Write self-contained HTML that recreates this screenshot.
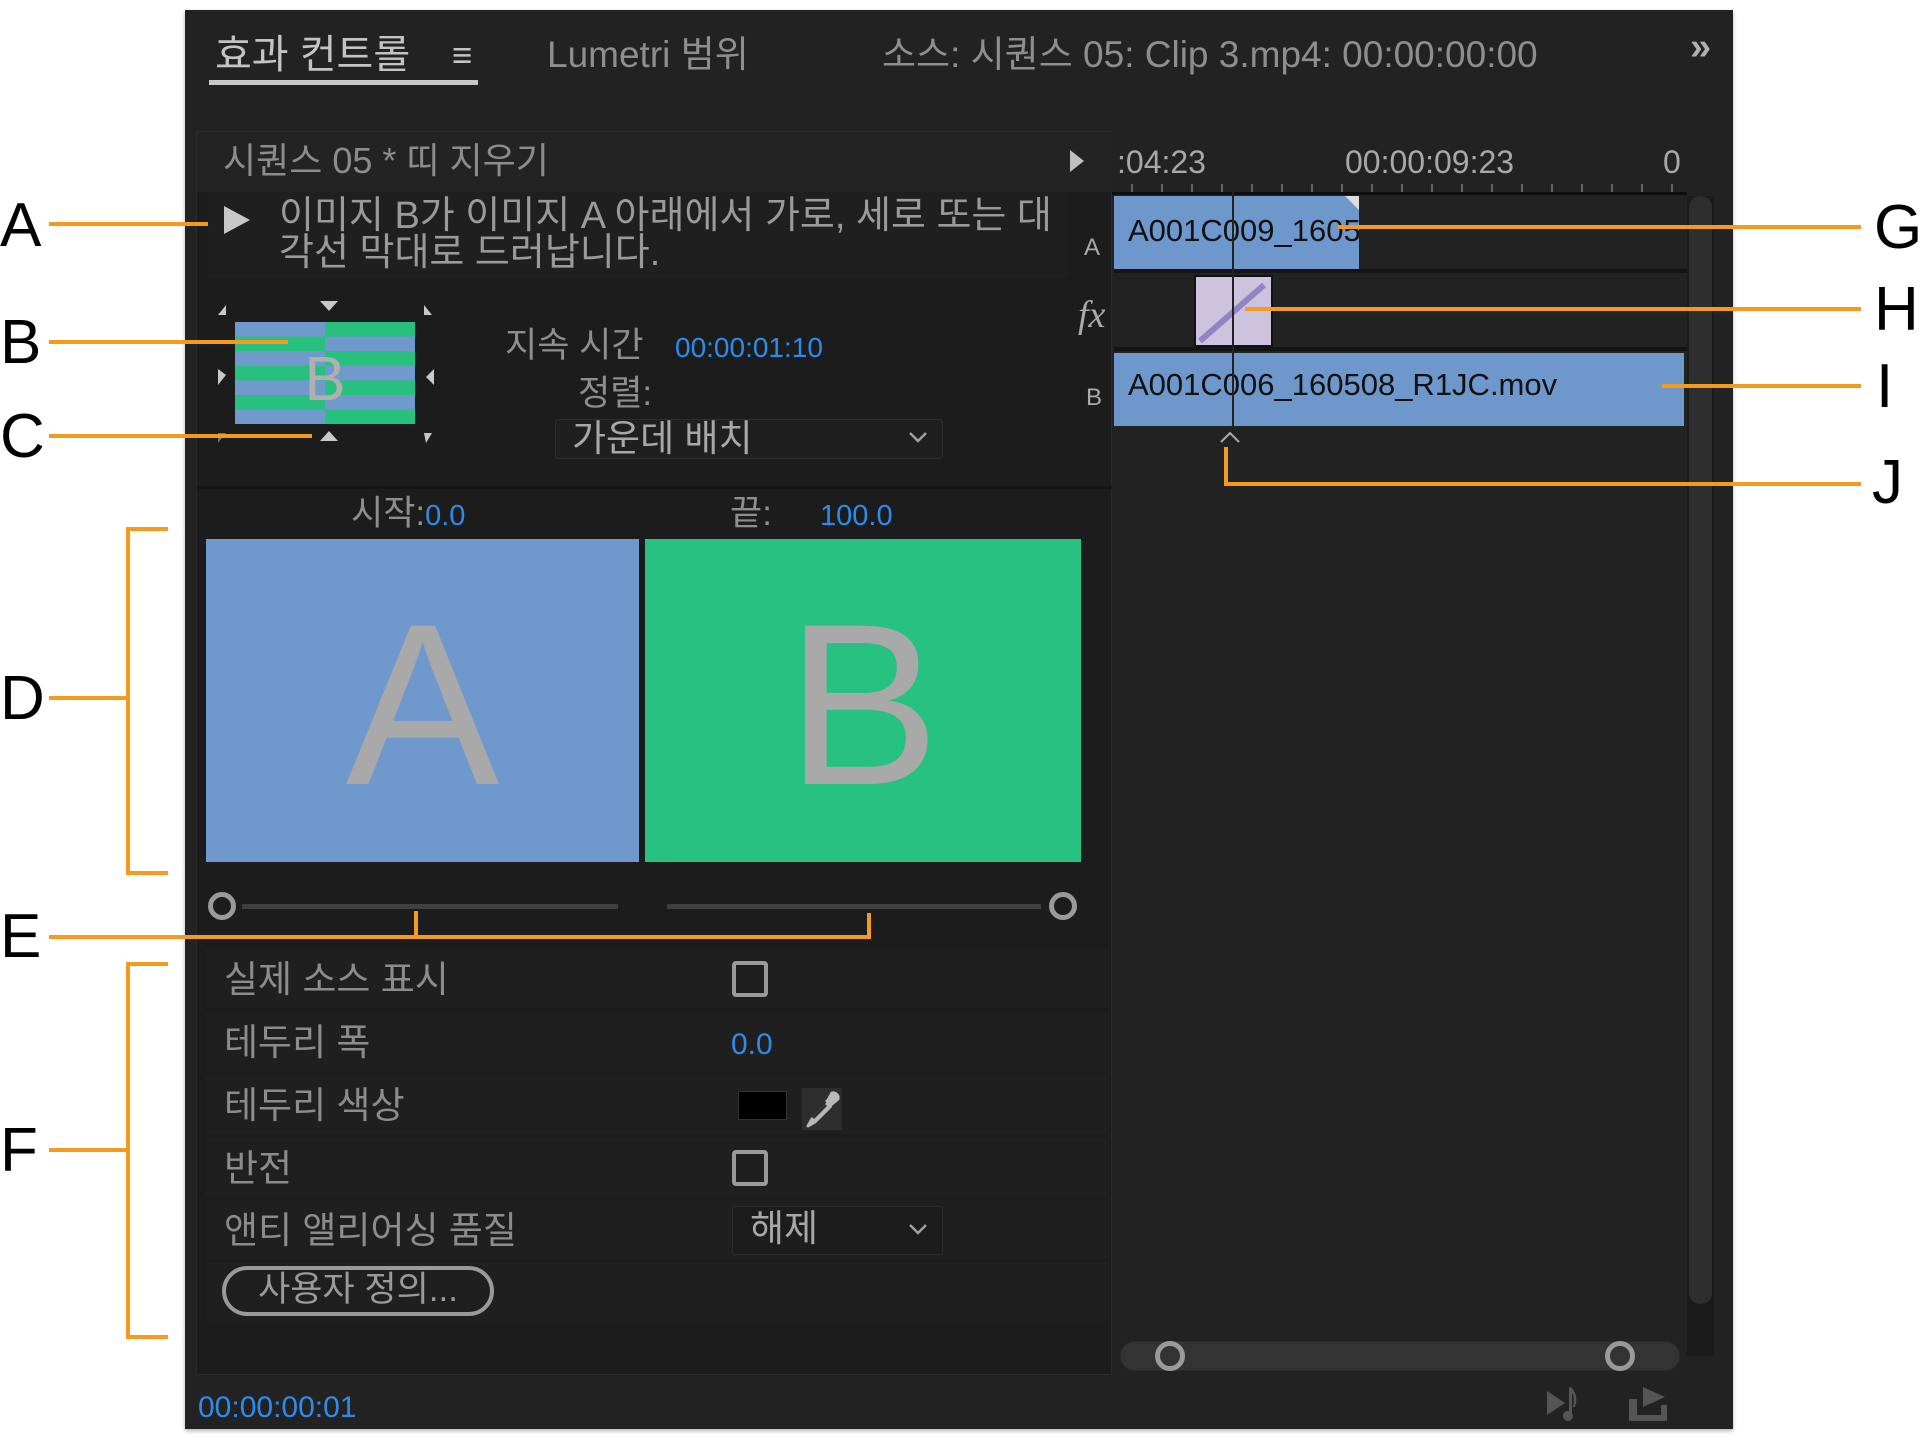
<!DOCTYPE html>
<html><head><meta charset="utf-8"><style>
*{margin:0;padding:0;box-sizing:border-box}
body{width:1920px;height:1442px;background:#fff;position:relative;overflow:hidden;font-family:"Liberation Sans","Noto Sans CJK KR",sans-serif}
.a{position:absolute}
.t{position:absolute;white-space:nowrap;line-height:1}
.o{position:absolute;background:#f39a1f}
.lbl{position:absolute;font-size:62px;color:#000;line-height:1;font-family:"Liberation Sans",sans-serif}
.g{color:#8c8c8c}
.bl{color:#2d8ceb}
.row{position:absolute;left:206px;width:903px;height:59px;background:#1f1f1f}
.cb{position:absolute;width:36px;height:36px;border:4px solid #9a9a9a;border-radius:4px}
.tri{position:absolute;width:0;height:0}
</style></head><body>
<div class="a" style="left:185px;top:10px;width:1548px;height:1419px;background:#222;box-shadow:0 2px 4px rgba(0,0,0,.3)"></div>
<!-- tabs -->
<div class="t" style="left:215px;top:35px;font-size:40px;color:#c4c4c4">효과 컨트롤</div>
<div class="t" style="left:452px;top:38px;font-size:35px;color:#c4c4c4">≡</div>
<div class="a" style="left:209px;top:80px;width:269px;height:5px;background:#c8c8c8"></div>
<div class="t" style="left:547px;top:36px;font-size:37px;color:#8e8e8e">Lumetri 범위</div>
<div class="t" style="left:882px;top:36px;font-size:37px;color:#8e8e8e">소스: 시퀀스 05: Clip 3.mp4: 00:00:00:00</div>
<div class="t" style="left:1690px;top:28px;font-size:38px;font-weight:bold;color:#b0b0b0">»</div>
<!-- left subpanel -->
<div class="a" style="left:196px;top:131px;width:916px;height:1244px;background:#1c1c1c;border:1px solid #2a2a2a"></div>
<div class="a" style="left:197px;top:132px;width:915px;height:60px;background:#232323"></div>
<div class="t g" style="left:223px;top:143px;font-size:36px">시퀀스 05 * 띠 지우기</div>
<div class="tri" style="left:1070px;top:150px;border-left:14px solid #c0c0c0;border-top:11px solid transparent;border-bottom:11px solid transparent"></div>
<div class="a" style="left:208px;top:192px;width:860px;height:86px;background:#1f1f1f"></div>
<div class="tri" style="left:224px;top:206px;border-left:26px solid #c8c8c8;border-top:14px solid transparent;border-bottom:14px solid transparent"></div>
<div class="t" style="left:279px;top:198px;font-size:38px;color:#9a9a9a;line-height:37px">이미지 B가 이미지 A 아래에서 가로, 세로 또는 대<br>각선 막대로 드러납니다.</div>
<!-- thumbnail -->
<svg class="a" style="left:210px;top:295px" width="230" height="160">
<g transform="translate(25,27)">
<rect x="0" y="0" width="90" height="102" fill="#7099cc"/><rect x="90" y="0" width="90" height="102" fill="#27c07f"/>
<rect x="0" y="14.6" width="90" height="14.6" fill="#27c07f"/><rect x="0" y="43.8" width="90" height="14.6" fill="#27c07f"/><rect x="0" y="73" width="90" height="14.6" fill="#27c07f"/>
<rect x="90" y="14.6" width="90" height="14.6" fill="#7099cc"/><rect x="90" y="43.8" width="90" height="14.6" fill="#7099cc"/><rect x="90" y="73" width="90" height="14.6" fill="#7099cc"/>
<text x="90" y="78" font-size="62" font-family="Liberation Sans" fill="#b0b0b0" text-anchor="middle">B</text>
</g>
<g fill="#c8c8c8">
<polygon points="8,20 16,10 16,20"/><polygon points="214,20 214,10 222,20"/>
<polygon points="110,6 128,6 119,16"/><polygon points="110,146 128,146 119,136"/>
<polygon points="8,74 16,80 8,90" /><polygon points="224,74 216,82 224,90"/>
<polygon points="8,138 16,138 8,148" opacity=".5"/><polygon points="214,138 222,138 216,148"/>
</g></svg>
<div class="t" style="left:505px;top:328px;font-size:35px;color:#8e8e8e">지속 시간</div>
<div class="t bl" style="left:675px;top:334px;font-size:28px">00:00:01:10</div>
<div class="t" style="left:578px;top:376px;font-size:35px;color:#8e8e8e">정렬:</div>
<div class="a" style="left:555px;top:419px;width:388px;height:40px;background:#1f1f1f;border:1px solid #2c2c2c;border-radius:3px"></div>
<div class="t" style="left:572px;top:420px;font-size:37px;color:#a8a8a8">가운데 배치</div>
<svg class="a" style="left:908px;top:430px" width="20" height="14"><path d="M2 3 L10 11 L18 3" stroke="#a0a0a0" stroke-width="2.5" fill="none"/></svg>
<!-- preview -->
<div class="a" style="left:197px;top:486px;width:915px;height:3px;background:#161616"></div>
<div class="t" style="left:351px;top:496px;font-size:35px;color:#8e8e8e">시작:<span class="bl" style="font-size:29px">0.0</span></div>
<div class="t" style="left:730px;top:496px;font-size:35px;color:#8e8e8e">끝:</div>
<div class="t bl" style="left:820px;top:502px;font-size:29px">100.0</div>
<div class="a" style="left:206px;top:539px;width:433px;height:323px;background:#6f98cc"></div>
<div class="a" style="left:645px;top:539px;width:436px;height:323px;background:#27c282"></div>
<div class="t" style="left:206px;top:590px;width:433px;text-align:center;font-size:230px;color:#a9a9a9">A</div>
<div class="t" style="left:645px;top:590px;width:436px;text-align:center;font-size:230px;color:#a9a9a9">B</div>
<!-- sliders -->
<div class="a" style="left:242px;top:904px;width:376px;height:5px;background:#3f3f3f"></div>
<div class="a" style="left:667px;top:904px;width:374px;height:5px;background:#3f3f3f"></div>
<div class="a" style="left:208px;top:892px;width:28px;height:28px;border:5px solid #9a9a9a;border-radius:50%"></div>
<div class="a" style="left:1049px;top:892px;width:28px;height:28px;border:5px solid #9a9a9a;border-radius:50%"></div>
<!-- rows -->
<div class="row" style="top:949px"></div><div class="row" style="top:1013px"></div><div class="row" style="top:1075px"></div>
<div class="row" style="top:1138px"></div><div class="row" style="top:1200px"></div><div class="row" style="top:1262px"></div>
<div class="t g" style="left:224px;top:961px;font-size:37px">실제 소스 표시</div>
<div class="cb" style="left:732px;top:961px"></div>
<div class="t g" style="left:224px;top:1024px;font-size:37px">테두리 폭</div>
<div class="t bl" style="left:731px;top:1030px;font-size:30px">0.0</div>
<div class="t g" style="left:224px;top:1087px;font-size:37px">테두리 색상</div>
<div class="a" style="left:738px;top:1091px;width:49px;height:29px;background:#000;border:1px solid #333"></div>
<div class="a" style="left:802px;top:1088px;width:40px;height:42px;background:#2e2e2e"></div>
<svg class="a" style="left:802px;top:1088px" width="40" height="42"><path d="M30 5 a5 5 0 0 1 6 6 l-6 5 l-4 -4z M24 12 l6 6 M26 15 L10 31 L6 38 L13 34 L29 18" stroke="#b8b8b8" stroke-width="3" fill="#b8b8b8" stroke-linejoin="round"/><path d="M24 17 L11 30" stroke="#2e2e2e" stroke-width="3"/></svg>
<div class="t g" style="left:224px;top:1150px;font-size:37px">반전</div>
<div class="cb" style="left:732px;top:1150px"></div>
<div class="t g" style="left:224px;top:1212px;font-size:37px">앤티 앨리어싱 품질</div>
<div class="a" style="left:732px;top:1206px;width:211px;height:49px;background:#1c1c1c;border:1px solid #2c2c2c;border-radius:3px"></div>
<div class="t" style="left:750px;top:1210px;font-size:37px;color:#a8a8a8">해제</div>
<svg class="a" style="left:908px;top:1222px" width="20" height="14"><path d="M2 3 L10 11 L18 3" stroke="#a0a0a0" stroke-width="2.5" fill="none"/></svg>
<div class="a" style="left:222px;top:1266px;width:272px;height:50px;border:4px solid #9a9a9a;border-radius:25px"></div>
<div class="t" style="left:222px;top:1272px;width:272px;text-align:center;font-size:35px;color:#9a9a9a">사용자 정의...</div>
<div class="t bl" style="left:198px;top:1393px;font-size:30px">00:00:00:01</div>
<!-- timeline -->
<div class="a" style="left:1112px;top:192px;width:575px;height:3px;background:#0e0e0e"></div>
<div class="t" style="left:1117px;top:146px;font-size:32px;color:#a8a8a8">:04:23</div>
<div class="t" style="left:1345px;top:146px;font-size:32px;color:#a8a8a8">00:00:09:23</div>
<div class="t" style="left:1663px;top:146px;font-size:32px;color:#a8a8a8">0</div>
<svg class="a" style="left:1112px;top:178px" width="575" height="14"><g stroke="#777" stroke-width="1.5">
<path d="M20 6V14M50 6V14M80 6V14M110 6V14M140 6V14M170 6V14M200 6V14M230 6V14M260 6V14M290 6V14M320 6V14M350 6V14M380 6V14M410 6V14M440 6V14M470 6V14M500 6V14M530 6V14M560 6V14"/></g></svg>
<div class="t" style="left:1084px;top:236px;font-size:24px;color:#aaa">A</div>
<div class="t" style="left:1078px;top:296px;font-size:38px;color:#aaa;font-style:italic;font-family:'Liberation Serif',serif">fx</div>
<div class="t" style="left:1086px;top:386px;font-size:24px;color:#aaa">B</div>
<div class="a" style="left:1114px;top:196px;width:245px;height:73px;background:#6e98cc"></div>
<div class="tri" style="left:1345px;top:196px;border-right:14px solid #ddd;border-bottom:14px solid transparent"></div>
<div class="a" style="left:1114px;top:269px;width:573px;height:4px;background:#141414"></div>
<div class="a" style="left:1114px;top:347px;width:573px;height:4px;background:#141414"></div>
<div class="a" style="left:1114px;top:196px;width:245px;height:73px;overflow:hidden"><div class="t" style="left:14px;top:19px;font-size:31px;color:#111">A001C009_160508</div></div>
<div class="a" style="left:1194px;top:275px;width:79px;height:72px;background:#cdc3df;border:2px solid #111"></div>
<svg class="a" style="left:1194px;top:275px" width="79" height="72"><path d="M6 66 L70 10" stroke="#9184c4" stroke-width="6"/></svg>
<div class="a" style="left:1114px;top:353px;width:570px;height:73px;background:#6e98cc"></div>
<div class="t" style="left:1128px;top:369px;font-size:31px;color:#111">A001C006_160508_R1JC.mov</div>
<div class="a" style="left:1232px;top:192px;width:1.5px;height:236px;background:#222"></div>
<svg class="a" style="left:1218px;top:430px" width="24" height="14"><path d="M3 12 L12 3 L21 12" stroke="#aaa" stroke-width="2" fill="none"/></svg>
<div class="a" style="left:1687px;top:196px;width:27px;height:1160px;background:#1b1b1b"></div>
<div class="a" style="left:1689px;top:196px;width:23px;height:1108px;background:#2e2e2e;border-radius:11px"></div>
<div class="a" style="left:1120px;top:1341px;width:560px;height:30px;background:#333;border-radius:15px;border:1px solid #2a2a2a"></div>
<div class="a" style="left:1155px;top:1341px;width:30px;height:30px;border:5px solid #9a9a9a;border-radius:50%"></div>
<div class="a" style="left:1605px;top:1341px;width:30px;height:30px;border:5px solid #9a9a9a;border-radius:50%"></div>
<svg class="a" style="left:1545px;top:1385px" width="130" height="40"><g fill="#555"><polygon points="2,6 20,18 2,30"/><path d="M24 2 L26 2 Q34 10 30 22 L28 22 Q30 12 27 8 L27 28 A5 5 0 1 1 24 26Z"/><path d="M84 14h8v16h24v-10h6v16h-38z"/><polygon points="98,2 120,12 98,22"/></g></svg>
<!-- annotations -->
<div class="lbl" style="left:0;top:195px">A</div>
<div class="o" style="left:49px;top:222px;width:159px;height:4px"></div>
<div class="lbl" style="left:0;top:312px">B</div>
<div class="o" style="left:49px;top:340px;width:239px;height:4px"></div>
<div class="lbl" style="left:0;top:406px">C</div>
<div class="o" style="left:49px;top:434px;width:263px;height:4px"></div>
<div class="lbl" style="left:0;top:668px">D</div>
<div class="o" style="left:49px;top:696px;width:79px;height:4px"></div>
<div class="o" style="left:126px;top:527px;width:4px;height:348px"></div>
<div class="o" style="left:126px;top:527px;width:42px;height:4px"></div>
<div class="o" style="left:126px;top:871px;width:42px;height:4px"></div>
<div class="lbl" style="left:0;top:906px">E</div>
<div class="o" style="left:49px;top:935px;width:822px;height:4px"></div>
<div class="o" style="left:414px;top:911px;width:4px;height:26px"></div>
<div class="o" style="left:867px;top:913px;width:4px;height:24px"></div>
<div class="lbl" style="left:0;top:1120px">F</div>
<div class="o" style="left:49px;top:1148px;width:79px;height:4px"></div>
<div class="o" style="left:126px;top:962px;width:4px;height:377px"></div>
<div class="o" style="left:126px;top:962px;width:42px;height:4px"></div>
<div class="o" style="left:126px;top:1335px;width:42px;height:4px"></div>
<div class="lbl" style="left:1874px;top:197px">G</div>
<div class="o" style="left:1338px;top:225px;width:523px;height:4px"></div>
<div class="lbl" style="left:1874px;top:279px">H</div>
<div class="o" style="left:1245px;top:307px;width:616px;height:4px"></div>
<div class="lbl" style="left:1876px;top:356px">I</div>
<div class="o" style="left:1662px;top:384px;width:199px;height:4px"></div>
<div class="lbl" style="left:1872px;top:452px">J</div>
<div class="o" style="left:1224px;top:447px;width:4px;height:39px"></div>
<div class="o" style="left:1224px;top:482px;width:637px;height:4px"></div>
</body></html>
